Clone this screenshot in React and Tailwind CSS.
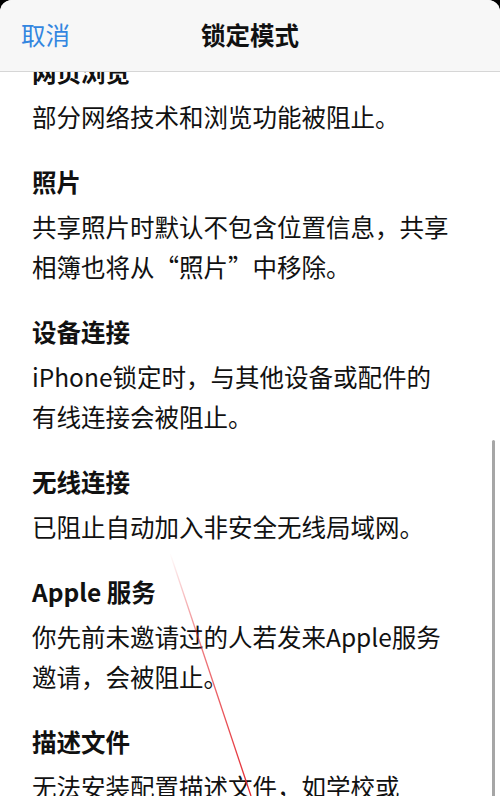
import React from "react";

const sections = [
  { title: "网页浏览", lines: ["部分网络技术和浏览功能被阻止。"] },
  {
    title: "照片",
    lines: ["共享照片时默认不包含位置信息，共享", "相簿也将从“照片”中移除。"],
  },
  {
    title: "设备连接",
    lines: ["iPhone锁定时，与其他设备或配件的", "有线连接会被阻止。"],
  },
  { title: "无线连接", lines: ["已阻止自动加入非安全无线局域网。"] },
  {
    title: "Apple 服务",
    lines: ["你先前未邀请过的人若发来Apple服务", "邀请，会被阻止。"],
  },
  { title: "描述文件", lines: ["无法安装配置描述文件，如学校或"] },
];

const Section = ({ title, lines }) => (
  <section className="mb-[25px]">
    <h2 className="text-[24.5px] font-semibold leading-[40px] text-[#111]">
      {title}
    </h2>
    <p className="mt-[5px] whitespace-nowrap text-[24.5px] leading-[40px] text-[#111]">
      {lines.map((line, i) => (
        <span key={i} className="block">
          {line}
        </span>
      ))}
    </p>
  </section>
);

export default function App() {
  return (
    <div className="relative h-[796px] w-[500px] overflow-hidden bg-black font-['Noto_Sans_CJK_SC',sans-serif]">
      <div className="flex h-full flex-col overflow-hidden rounded-t-[12px] bg-white">
        <header className="grid h-[72px] shrink-0 grid-cols-[1fr_auto_1fr] items-center border-b border-[#d6d6d6] bg-[#f7f7f7] px-[21px]">
          <button
            type="button"
            className="justify-self-start text-[24.5px] text-[#3386e0]"
          >
            取消
          </button>
          <h1 className="text-[24.5px] font-semibold text-[#111]">锁定模式</h1>
          <div />
        </header>
        <main className="flex-1 overflow-hidden">
          <div className="-mt-[20px] px-[32px]">
            {sections.map((s) => (
              <Section key={s.title} title={s.title} lines={s.lines} />
            ))}
          </div>
        </main>
      </div>

      {/* scroll indicator */}
      <div className="absolute right-[5px] top-[440px] h-[360px] w-[3px] rounded-full bg-[#a6a6a6]" />

      {/* red annotation stroke */}
      <svg
        className="pointer-events-none absolute inset-0"
        width="500"
        height="796"
        viewBox="0 0 500 796"
      >
        <defs>
          <linearGradient id="fade" x1="0" y1="553" x2="0" y2="796" gradientUnits="userSpaceOnUse">
            <stop offset="0" stopColor="#e3262d" stopOpacity="0" />
            <stop offset="0.35" stopColor="#e3262d" stopOpacity="0.6" />
            <stop offset="1" stopColor="#e3262d" stopOpacity="1" />
          </linearGradient>
        </defs>
        <line x1="170" y1="553" x2="251" y2="796" stroke="url(#fade)" strokeWidth="1.3" />
      </svg>
    </div>
  );
}
